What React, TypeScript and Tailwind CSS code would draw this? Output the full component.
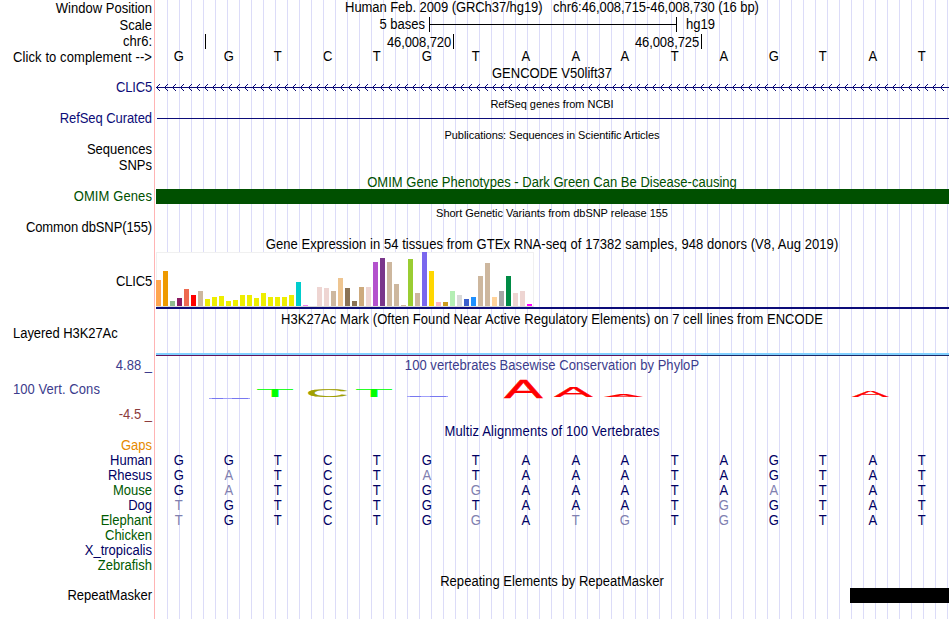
import React from 'react';

interface Label {
  text: string;
  className: string;
}

const LABELS: Label[] = [
  { text: 'Window Position', className: 'mt-px' },
  { text: 'Scale', className: 'mt-0.5' },
  { text: 'chr6:', className: 'mt-px' },
  { text: 'Click to complement -->', className: 'mt-px tracking-[0.09px]' },
  { text: 'CLIC5', className: 'mt-[15px] tracking-[-0.2px] text-[#0c0c78]' },
  { text: 'RefSeq Curated', className: 'mt-4 tracking-[-0.07px] text-[#0c0c78]' },
  { text: 'Sequences', className: 'mt-4' },
  { text: 'SNPs', className: 'mt-px' },
  { text: 'OMIM Genes', className: 'mt-4 tracking-[0.1px] text-[#005000]' },
  { text: 'Common dbSNP(155)', className: 'mt-4 tracking-[-0.12px]' },
  { text: 'CLIC5', className: 'mt-[39px] tracking-[-0.2px]' },
  { text: 'Layered H3K27Ac', className: 'mt-[37px] pr-[37px] tracking-[-0.07px]' },
  { text: '4.88 _', className: 'mt-[17px] text-[#3c3c8c]' },
  { text: '100 Vert. Cons', className: 'mt-[9px] pr-[56px] tracking-[0.08px] text-[#3c3c8c]' },
  { text: '-4.5 _', className: 'mt-2.5 text-[#8c3c3c]' },
  { text: 'Gaps', className: 'mt-4 text-[#e68a00]' },
  { text: 'Human', className: 'text-[#000064]' },
  { text: 'Rhesus', className: 'text-[#000064]' },
  { text: 'Mouse', className: 'text-[#005a00]' },
  { text: 'Dog', className: 'text-[#000064]' },
  { text: 'Elephant', className: 'text-[#005a00]' },
  { text: 'Chicken', className: 'text-[#005a00]' },
  { text: 'X_tropicalis', className: 'text-[#000064]' },
  { text: 'Zebrafish', className: 'text-[#005a00]' },
  { text: 'RepeatMasker', className: 'mt-[15px]' },
];

const SEQUENCE = 'GGTCTGTAAATAGTAT';

const ALIGNMENTS = [
  'GGTCTGTAAATAGTAT',
  'GATCTATAAATAGTAT',
  'GATCTGGAAATAATAT',
  'TGTCTGTAAATGGTAT',
  'TGTCTGGATGTGGTAT',
];

// [height, color] for each GTEx tissue
const TISSUES: [number, string][] = [
  [26, '#ffa54f'], [35, '#ee9a00'], [5, '#8fbc8f'], [8, '#8b1c62'], [17, '#ee6a50'], [11, '#ff0000'],
  [15, '#cdb79e'], [7, '#eeee00'], [9, '#eeee00'], [10, '#eeee00'], [5, '#eeee00'], [6, '#eeee00'],
  [11, '#eeee00'], [11, '#eeee00'], [8, '#eeee00'], [13, '#eeee00'], [9, '#eeee00'], [9, '#eeee00'],
  [9, '#eeee00'], [11, '#eeee00'], [24, '#00cdcd'], [1, '#ee82ee'], [0, '#9ac0cd'], [19, '#eed5d2'],
  [18, '#eed5d2'], [15, '#cdb79e'], [28, '#eec591'], [18, '#8b7355'], [5, '#8b7355'], [19, '#cdaa7d'],
  [19, '#eed5d2'], [44, '#b452cd'], [48, '#7a378b'], [44, '#cdb79e'], [22, '#cdb79e'], [1, '#cdb79e'],
  [47, '#9acd32'], [13, '#cdb79e'], [54, '#7a67ee'], [35, '#ffd700'], [4, '#ffb6c1'], [4, '#cd9b1d'],
  [15, '#b4eeb4'], [11, '#d9d9d9'], [7, '#3a5fcd'], [9, '#1e90ff'], [30, '#cdb79e'], [43, '#cdb79e'],
  [9, '#ffd39b'], [15, '#a6a6a6'], [30, '#008b45'], [13, '#eed5d2'], [15, '#eed5d2'], [2, '#ff00ff'],
];

const Title: React.FC<{ className?: string; small?: boolean; children: React.ReactNode }> = ({ className = '', small, children }) => (
  <div className={`h-[15px] shrink-0 text-center leading-[15px] whitespace-pre ${small ? 'text-[11px]' : 'scale-x-[0.929]'} ${className}`}>
    {children}
  </div>
);

const Bases: React.FC<{ bases: string; compare?: string }> = ({ bases, compare }) => (
  <div className="-ml-px grid h-[15px] w-[793px] shrink-0 grid-cols-16 text-center leading-[15px]">
    {bases.split('').map((base, i) => (
      <span key={i} className={`scale-x-[0.929] ${compare && compare[i] !== base ? 'text-[#8080b0]' : ''}`}>{base}</span>
    ))}
  </div>
);

// ink box of each letter in a 100 unit em: left, width, cap height
const INK: Record<string, [number, number, number]> = {
  A: [-0.6, 67.9, 68.8],
  T: [1.3, 58.5, 69.6],
  C: [4.2, 64.6, 70],
};

const LogoLetter: React.FC<{ letter: string; x: number; y: number; w: number; h: number; fill: string }> = ({ letter, x, y, w, h, fill }) => {
  const [left, width, cap] = INK[letter];
  const sx = w / width;
  return (
    <text fontSize="100" fill={fill} stroke={fill} strokeWidth="1.6" transform={`translate(${x - left * sx} ${y + h}) scale(${sx} ${h / cap})`}>
      {letter}
    </text>
  );
};

const App: React.FC = () => {
  return (
    <div className="flex h-[619px] w-[950px] overflow-hidden bg-white font-['Liberation_Sans',Arial,sans-serif] text-[14px] text-black">
      {/* Track labels */}
      <div className="flex w-[154px] shrink-0 flex-col pr-0.5 text-right">
        {LABELS.map((label, i) => (
          <div key={i} className={`h-[15px] shrink-0 origin-right scale-x-[0.929] leading-[15px] whitespace-pre ${label.className}`}>{label.text}</div>
        ))}
      </div>

      {/* Track image, one guide line every 12px */}
      <div className="flex w-[795px] shrink-0 flex-col border-l border-[#ffb4b4] bg-[linear-gradient(#fff,#fff),linear-gradient(90deg,transparent_11px,#dcdcf8_11px)] bg-[length:1px_100%,12px_100%] bg-[position:0px_0px,1px_0px] [background-clip:padding-box] [background-repeat:no-repeat,repeat]">
        <Title className="tracking-[-0.08px]">Human Feb. 2009 (GRCh37/hg19)   chr6:46,008,715-46,008,730 (16 bp)</Title>

        {/* Scale */}
        <div className="mt-0.5 flex h-[15px] items-center leading-[15px]">
          <span className="w-[270px] origin-right scale-x-[0.929] text-right">5 bases</span>
          <span className="ml-1 flex h-[15px] w-[248px] items-center border-x border-black">
            <span className="h-px w-full bg-black" />
          </span>
          <span className="ml-[9px] origin-left scale-x-[0.929]">hg19</span>
        </div>
        <div className="mt-0.5 flex h-[15px] leading-[17px] tracking-[-0.1px]">
          <span className="w-[51px] border-r border-black" />
          <span className="w-[248px] border-r border-black pr-0.5 text-right">
            <span className="inline-block origin-right scale-x-[0.929]">46,008,720</span>
          </span>
          <span className="w-[248px] border-r border-black pr-0.5 text-right">
            <span className="inline-block origin-right scale-x-[0.929]">46,008,725</span>
          </span>
        </div>
        <Bases bases={SEQUENCE} />

        <Title className="mt-0.5">GENCODE V50lift37</Title>
        <svg className="mt-[3px] h-[7px] w-full shrink-0" shapeRendering="crispEdges">
          <defs>
            <pattern id="strand" x="1" y="0" width="8" height="7" patternUnits="userSpaceOnUse">
              <path d="M0 3h8v1h-8zM1 2h1v1h-1zM2 1h1v1h-1zM3 0h1v1h-1zM1 4h1v1h-1zM2 5h1v1h-1zM3 6h1v1h-1z" fill="#0c0c78" />
            </pattern>
          </defs>
          <rect x="1" width="793" height="7" fill="url(#strand)" />
        </svg>
        <Title small className="mt-[6px] tracking-[-0.04px]">RefSeq genes from NCBI</Title>
        <div className="mt-[6px] ml-0.5 h-px shrink-0 bg-[#0c0c78]" />
        <Title small className="mt-[9px] tracking-[-0.06px]">Publications: Sequences in Scientific Articles</Title>
        <Title className="mt-[32px] tracking-[0.02px] text-[#005000]">OMIM Gene Phenotypes - Dark Green Can Be Disease-causing</Title>
        <div className="z-10 -mt-px ml-px h-[15px] shrink-0 bg-[#005000]" />
        <Title small className="mt-0.5 tracking-[-0.03px]">Short Genetic Variants from dbSNP release 155</Title>

        {/* Gene expression */}
        <Title className="mt-4 tracking-[0.06px]">Gene Expression in 54 tissues from GTEx RNA-seq of 17382 samples, 948 donors (V8, Aug 2019)</Title>
        <div className="ml-px flex h-[55px] w-[378px] shrink-0 items-end gap-0.5 border border-[#f0f0f0] border-b-[#d8d8d8] bg-white">
          {TISSUES.map(([height, color], i) => (
            <span key={i} className="w-[5px] shrink-0 first:-ml-px" style={{ height, backgroundColor: color }} />
          ))}
        </div>
        <div className="ml-px h-0.5 shrink-0 bg-[#0c0c78]" />

        <Title className="mt-[3px] tracking-[0.05px]">H3K27Ac Mark (Often Found Near Active Regulatory Elements) on 7 cell lines from ENCODE</Title>
        <div className="mt-[26px] ml-px h-0.5 shrink-0 bg-[#80d0ff]" />
        <div className="ml-px flex h-px shrink-0">
          <span className="w-[545px] bg-[#64145a]" />
          <span className="flex-1 bg-[#1e2864]" />
        </div>

        {/* Conservation */}
        <Title className="mt-0.5 tracking-[0.05px] text-[#3c3c8c]">100 vertebrates Basewise Conservation by PhyloP</Title>
        <svg className="mt-[5px] h-6 w-full shrink-0 overflow-visible">
          <path d="M54 20.5h41M252 18.5h41" stroke="#a0a0fa" />
          <path d="M57 20.5h11M77 20.5h16M255 18.5h11M275 18.5h16" stroke="#7878f0" />
          <LogoLetter letter="T" x={102} y={11} w={36} h={8} fill="#00ff00" />
          <LogoLetter letter="C" x={153} y={11} w={39} h={8} fill="#a0a000" />
          <LogoLetter letter="T" x={201} y={11} w={36} h={8} fill="#00ff00" />
          <LogoLetter letter="A" x={349} y={2} w={39} h={18} fill="#ff0000" />
          <LogoLetter letter="A" x={399} y={9} w={39} h={10} fill="#ff0000" />
          <LogoLetter letter="A" x={449} y={16} w={39} h={3} fill="#ff0000" />
          <LogoLetter letter="A" x={697} y={13} w={37} h={6} fill="#ff0000" />
        </svg>

        {/* Alignments */}
        <Title className="mt-[22px] tracking-[0.11px] text-[#000064]">Multiz Alignments of 100 Vertebrates</Title>
        <div className="mt-[14px] flex flex-col text-[#000064]">
          {ALIGNMENTS.map((row, i) => (
            <Bases key={i} bases={row} compare={SEQUENCE} />
          ))}
        </div>

        <Title className="mt-[46px] tracking-[0.03px]">Repeating Elements by RepeatMasker</Title>
        <div className="-mt-px h-[15px] w-[99px] shrink-0 self-end bg-black" />
      </div>
    </div>
  );
};

export default App;
